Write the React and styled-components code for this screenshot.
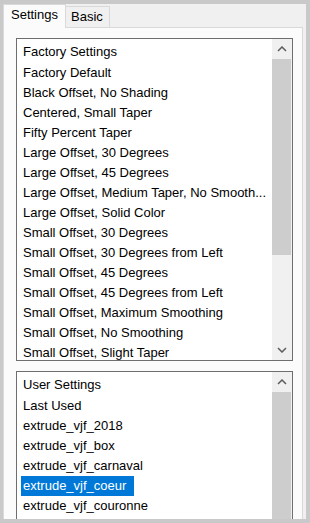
import React from "react";
import styled, { createGlobalStyle } from "styled-components";

const GlobalStyle = createGlobalStyle`
  html, body {
    margin: 0;
    padding: 0;
    background: #c9c9c9;
  }
  body {
    font-family: "Liberation Sans", Arial, sans-serif;
    font-size: 13px;
    color: #000;
  }
  * { box-sizing: border-box; }
`;

const Window = styled.div`
  margin: 4px 0 0 3px;
  width: 303px;
  height: 515px;
  background: #f0f0f0;
  display: flex;
  flex-direction: column;
  overflow: hidden;
`;

const TabStrip = styled.div`
  display: flex;
  align-items: flex-end;
  height: 23px;
  flex-shrink: 0;
  position: relative;
  z-index: 1;
`;

const Tab = styled.div`
  line-height: 20px;
  white-space: nowrap;
  border: 1px solid #d9d9d9;
  border-bottom: none;
  ${(p) =>
    p.$active
      ? `
    height: 24px;
    margin-bottom: -1px;
    padding: 0 7px 0 7px;
    background: #fbfbfb;
  `
      : `
    height: 21px;
    padding: 0 6px 0 5px;
    border-left: none;
    background: #f0f0f0;
  `}
`;

const Panel = styled.div`
  width: 300px;
  flex: 1;
  min-height: 0;
  background: #fbfbfb;
  border: 1px solid #d9d9d9;
  border-bottom: none;
  padding: 10px 9px 0 12px;
  display: flex;
  flex-direction: column;
  overflow: hidden;
`;

const ListBox = styled.div`
  flex-shrink: 0;
  height: ${(p) => p.$height}px;
  margin-bottom: 10px;
  border: 1px solid #6e6e6e;
  background: #fff;
  display: flex;
  overflow: hidden;
`;

const Items = styled.div`
  flex: 1;
  min-width: 0;
  padding-top: 3px;
  overflow: hidden;
`;

const Row = styled.div`
  height: ${(p) => (p.$header ? 21 : 20)}px;
  line-height: 20px;
  padding-left: 4px;
  white-space: nowrap;
  overflow: hidden;
`;

const Label = styled.span`
  display: inline-block;
  padding: 0 8px 0 2px;
  background: ${(p) => (p.$selected ? "#0078d7" : "transparent")};
  color: ${(p) => (p.$selected ? "#fff" : "#000")};
`;

const ScrollBar = styled.div`
  width: 20px;
  flex-shrink: 0;
  background: #f0f0f0;
  display: flex;
  flex-direction: column;
`;

const ArrowButton = styled.div`
  height: 20px;
  flex-shrink: 0;
  display: flex;
  align-items: center;
  justify-content: center;
  padding-right: 1px;
`;

const Thumb = styled.div`
  flex-shrink: 0;
  margin-right: 1px;
  background: #cdcdcd;
`;

const Track = styled.div`
  flex: 1;
`;

const Chevron = ({ down }) => (
  <svg width="10" height="6" viewBox="0 0 10 6">
    <path
      d={down ? "M1 1 L5 5 L9 1" : "M1 5 L5 1 L9 5"}
      fill="none"
      stroke="#5c5c5c"
      strokeWidth="1.5"
    />
  </svg>
);

const factory = [
  "Factory Default",
  "Black Offset, No Shading",
  "Centered, Small Taper",
  "Fifty Percent Taper",
  "Large Offset, 30 Degrees",
  "Large Offset, 45 Degrees",
  "Large Offset, Medium Taper, No Smooth...",
  "Large Offset, Solid Color",
  "Small Offset, 30 Degrees",
  "Small Offset, 30 Degrees from Left",
  "Small Offset, 45 Degrees",
  "Small Offset, 45 Degrees from Left",
  "Small Offset, Maximum Smoothing",
  "Small Offset, No Smoothing",
  "Small Offset, Slight Taper",
];

const user = [
  "Last Used",
  "extrude_vjf_2018",
  "extrude_vjf_box",
  "extrude_vjf_carnaval",
  "extrude_vjf_coeur",
  "extrude_vjf_couronne",
];

export default function App() {
  return (
    <>
      <GlobalStyle />
      <Window>
        <TabStrip>
          <Tab $active>Settings</Tab>
          <Tab>Basic</Tab>
        </TabStrip>
        <Panel>
          <ListBox $height={323}>
            <Items>
              <Row $header>
                <Label>Factory Settings</Label>
              </Row>
              {factory.map((t) => (
                <Row key={t}>
                  <Label>{t}</Label>
                </Row>
              ))}
            </Items>
            <ScrollBar>
              <ArrowButton>
                <Chevron />
              </ArrowButton>
              <Thumb style={{ height: 196 }} />
              <Track />
              <ArrowButton>
                <Chevron down />
              </ArrowButton>
            </ScrollBar>
          </ListBox>
          <ListBox $height={200}>
            <Items>
              <Row $header>
                <Label>User Settings</Label>
              </Row>
              {user.map((t) => (
                <Row key={t}>
                  <Label $selected={t === "extrude_vjf_coeur"}>{t}</Label>
                </Row>
              ))}
            </Items>
            <ScrollBar>
              <ArrowButton>
                <Chevron />
              </ArrowButton>
              <Thumb style={{ height: 160 }} />
              <Track />
            </ScrollBar>
          </ListBox>
        </Panel>
      </Window>
    </>
  );
}
